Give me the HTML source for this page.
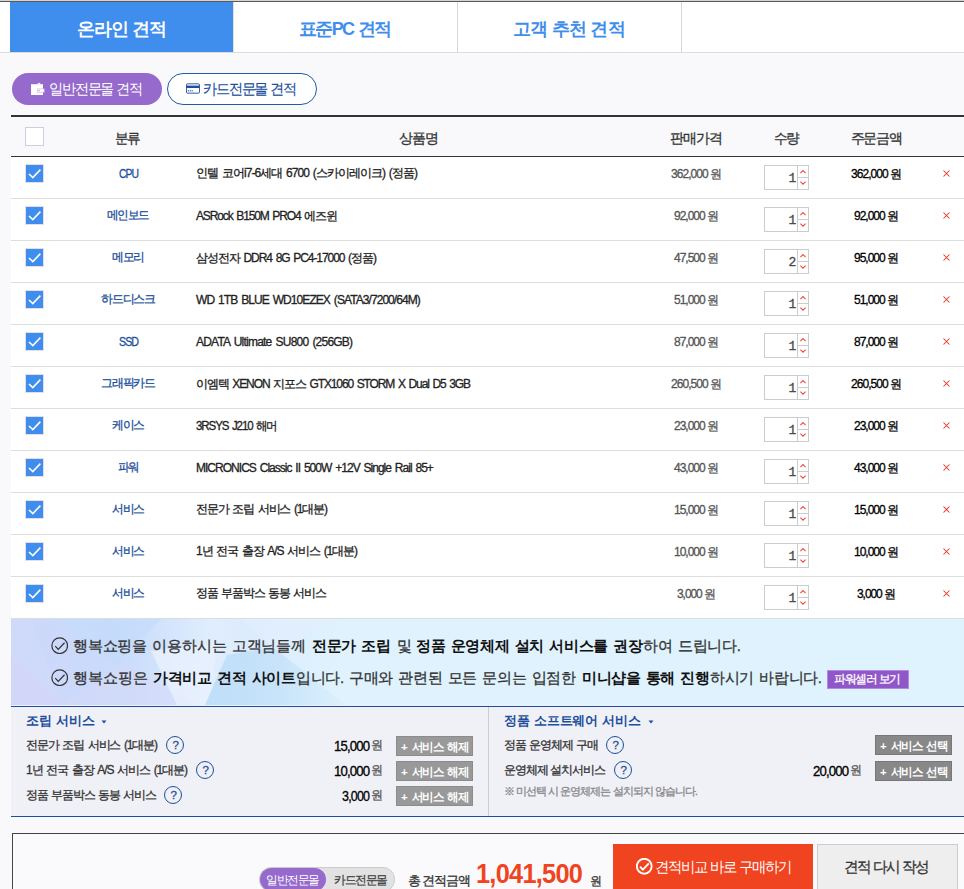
<!DOCTYPE html>
<html lang="ko"><head><meta charset="utf-8"><title>온라인 견적</title>
<style>
html,body{margin:0;padding:0}
body{width:964px;height:889px;overflow:hidden;position:relative;background:#f9f9fc;font-family:"Liberation Sans",sans-serif;}
.abs{position:absolute;display:block}
.t{position:absolute;white-space:nowrap;line-height:20px;height:20px;transform-origin:0 50%}
.b{font-weight:bold}
.t{-webkit-text-stroke:0.3px}
.b,.ns{-webkit-text-stroke:0}
</style></head><body>
<div class="abs" style="left:0;top:0;width:964px;height:52px;background:#fff"></div>
<div class="abs" style="left:0;top:0;width:964px;height:1px;background:#d4d4d4"></div>
<div class="abs" style="left:0;top:1px;width:964px;height:1px;background:#5a5a5a"></div>
<div class="abs" style="left:0;top:52px;width:964px;height:1px;background:#dcdcdc"></div>
<div class="abs" style="left:10px;top:2px;width:223px;height:50px;background:#3f8ded"></div>
<div class="abs" style="left:233px;top:2px;width:1px;height:50px;background:#e4e0dc"></div>
<div class="abs" style="left:457px;top:2px;width:1px;height:50px;background:#d8d8d8"></div>
<div class="abs" style="left:681px;top:2px;width:1px;height:50px;background:#d8d8d8"></div>
<div class="abs" style="left:12px;top:73px;width:150px;height:32px;border-radius:16px;background:#9669cc"></div>
<svg class="abs" style="left:30px;top:82px" width="15" height="14" viewBox="0 0 15 14"><path d="M1 2.2 H13 V13 H1 Z" fill="#fff"/><path d="M6.4 2.3 L9.4 0.8 L11 2.3 Z" fill="#fff"/><rect x="7.3" y="6.9" width="6.9" height="3.3" fill="#fff" stroke="#c8aeea" stroke-width="0.6"/><circle cx="9" cy="8.55" r="0.7" fill="#a98be0"/></svg>
<div class="abs" style="left:167px;top:73px;width:148px;height:30px;border-radius:16px;background:#fff;border:1px solid #1f5ba8"></div>
<svg class="abs" style="left:185.5px;top:83px" width="14" height="11" viewBox="0 0 15 11"><rect x="0.5" y="0.5" width="14" height="10" rx="1.2" fill="#fff" stroke="#1d4f9c" stroke-width="1"/><rect x="0.5" y="2.4" width="14" height="2.6" fill="#1d4f9c"/><rect x="2" y="7.4" width="1.2" height="1.2" fill="#1d4f9c"/><rect x="4" y="7.4" width="1.2" height="1.2" fill="#1d4f9c"/><rect x="6" y="7.4" width="1.2" height="1.2" fill="#1d4f9c"/></svg>
<div class="abs" style="left:11px;top:115px;width:953px;height:2px;background:#333"></div>
<div class="abs" style="left:11px;top:156px;width:953px;height:1px;background:#333"></div>
<div class="abs" style="left:11px;top:157px;width:953px;height:462px;background:#fff"></div>
<div class="abs" style="left:25px;top:127px;width:17px;height:17px;background:#fff;border:1px solid #cfcde0"></div>
<div class="abs" style="left:11px;top:198px;width:953px;height:1px;background:#ddd"></div>
<div class="abs" style="left:25px;top:164px;width:17px;height:17px;background:#3f8ded;border:1px solid #e6dcec"></div>
<svg class="abs" style="left:25px;top:164px" width="19" height="19" viewBox="0 0 19 19"><path d="M4 10 L7.8 13.6 L15.4 5.6" fill="none" stroke="#fff" stroke-width="1.6"/></svg>
<div class="abs" style="left:764px;top:165px;width:43px;height:23px;background:#fff;border:1px solid #ccc"></div>
<div class="abs" style="left:797px;top:166px;width:1px;height:23px;background:#ccc"></div>
<div class="abs" style="left:798px;top:177px;width:10px;height:1px;background:#ccc"></div>
<svg class="abs" style="left:798px;top:166px" width="10" height="23" viewBox="0 0 10 23"><path d="M2.4 7.2 L5 4.6 L7.6 7.2" fill="none" stroke="#f4463c" stroke-width="1.05"/><path d="M2.4 15.6 L5 18.2 L7.6 15.6" fill="none" stroke="#f4463c" stroke-width="1.05"/></svg>
<svg class="abs" style="left:942px;top:169px" width="9" height="9" viewBox="0 0 9 9"><path d="M1.5 1.5 L7.5 7.5 M7.5 1.5 L1.5 7.5" fill="none" stroke="#f03424" stroke-width="1.05"/></svg>
<div class="abs" style="left:11px;top:240px;width:953px;height:1px;background:#ddd"></div>
<div class="abs" style="left:25px;top:206px;width:17px;height:17px;background:#3f8ded;border:1px solid #e6dcec"></div>
<svg class="abs" style="left:25px;top:206px" width="19" height="19" viewBox="0 0 19 19"><path d="M4 10 L7.8 13.6 L15.4 5.6" fill="none" stroke="#fff" stroke-width="1.6"/></svg>
<div class="abs" style="left:764px;top:207px;width:43px;height:23px;background:#fff;border:1px solid #ccc"></div>
<div class="abs" style="left:797px;top:208px;width:1px;height:23px;background:#ccc"></div>
<div class="abs" style="left:798px;top:219px;width:10px;height:1px;background:#ccc"></div>
<svg class="abs" style="left:798px;top:208px" width="10" height="23" viewBox="0 0 10 23"><path d="M2.4 7.2 L5 4.6 L7.6 7.2" fill="none" stroke="#f4463c" stroke-width="1.05"/><path d="M2.4 15.6 L5 18.2 L7.6 15.6" fill="none" stroke="#f4463c" stroke-width="1.05"/></svg>
<svg class="abs" style="left:942px;top:211px" width="9" height="9" viewBox="0 0 9 9"><path d="M1.5 1.5 L7.5 7.5 M7.5 1.5 L1.5 7.5" fill="none" stroke="#f03424" stroke-width="1.05"/></svg>
<div class="abs" style="left:11px;top:282px;width:953px;height:1px;background:#ddd"></div>
<div class="abs" style="left:25px;top:248px;width:17px;height:17px;background:#3f8ded;border:1px solid #e6dcec"></div>
<svg class="abs" style="left:25px;top:248px" width="19" height="19" viewBox="0 0 19 19"><path d="M4 10 L7.8 13.6 L15.4 5.6" fill="none" stroke="#fff" stroke-width="1.6"/></svg>
<div class="abs" style="left:764px;top:249px;width:43px;height:23px;background:#fff;border:1px solid #ccc"></div>
<div class="abs" style="left:797px;top:250px;width:1px;height:23px;background:#ccc"></div>
<div class="abs" style="left:798px;top:261px;width:10px;height:1px;background:#ccc"></div>
<svg class="abs" style="left:798px;top:250px" width="10" height="23" viewBox="0 0 10 23"><path d="M2.4 7.2 L5 4.6 L7.6 7.2" fill="none" stroke="#f4463c" stroke-width="1.05"/><path d="M2.4 15.6 L5 18.2 L7.6 15.6" fill="none" stroke="#f4463c" stroke-width="1.05"/></svg>
<svg class="abs" style="left:942px;top:253px" width="9" height="9" viewBox="0 0 9 9"><path d="M1.5 1.5 L7.5 7.5 M7.5 1.5 L1.5 7.5" fill="none" stroke="#f03424" stroke-width="1.05"/></svg>
<div class="abs" style="left:11px;top:324px;width:953px;height:1px;background:#ddd"></div>
<div class="abs" style="left:25px;top:290px;width:17px;height:17px;background:#3f8ded;border:1px solid #e6dcec"></div>
<svg class="abs" style="left:25px;top:290px" width="19" height="19" viewBox="0 0 19 19"><path d="M4 10 L7.8 13.6 L15.4 5.6" fill="none" stroke="#fff" stroke-width="1.6"/></svg>
<div class="abs" style="left:764px;top:291px;width:43px;height:23px;background:#fff;border:1px solid #ccc"></div>
<div class="abs" style="left:797px;top:292px;width:1px;height:23px;background:#ccc"></div>
<div class="abs" style="left:798px;top:303px;width:10px;height:1px;background:#ccc"></div>
<svg class="abs" style="left:798px;top:292px" width="10" height="23" viewBox="0 0 10 23"><path d="M2.4 7.2 L5 4.6 L7.6 7.2" fill="none" stroke="#f4463c" stroke-width="1.05"/><path d="M2.4 15.6 L5 18.2 L7.6 15.6" fill="none" stroke="#f4463c" stroke-width="1.05"/></svg>
<svg class="abs" style="left:942px;top:295px" width="9" height="9" viewBox="0 0 9 9"><path d="M1.5 1.5 L7.5 7.5 M7.5 1.5 L1.5 7.5" fill="none" stroke="#f03424" stroke-width="1.05"/></svg>
<div class="abs" style="left:11px;top:366px;width:953px;height:1px;background:#ddd"></div>
<div class="abs" style="left:25px;top:332px;width:17px;height:17px;background:#3f8ded;border:1px solid #e6dcec"></div>
<svg class="abs" style="left:25px;top:332px" width="19" height="19" viewBox="0 0 19 19"><path d="M4 10 L7.8 13.6 L15.4 5.6" fill="none" stroke="#fff" stroke-width="1.6"/></svg>
<div class="abs" style="left:764px;top:333px;width:43px;height:23px;background:#fff;border:1px solid #ccc"></div>
<div class="abs" style="left:797px;top:334px;width:1px;height:23px;background:#ccc"></div>
<div class="abs" style="left:798px;top:345px;width:10px;height:1px;background:#ccc"></div>
<svg class="abs" style="left:798px;top:334px" width="10" height="23" viewBox="0 0 10 23"><path d="M2.4 7.2 L5 4.6 L7.6 7.2" fill="none" stroke="#f4463c" stroke-width="1.05"/><path d="M2.4 15.6 L5 18.2 L7.6 15.6" fill="none" stroke="#f4463c" stroke-width="1.05"/></svg>
<svg class="abs" style="left:942px;top:337px" width="9" height="9" viewBox="0 0 9 9"><path d="M1.5 1.5 L7.5 7.5 M7.5 1.5 L1.5 7.5" fill="none" stroke="#f03424" stroke-width="1.05"/></svg>
<div class="abs" style="left:11px;top:408px;width:953px;height:1px;background:#ddd"></div>
<div class="abs" style="left:25px;top:374px;width:17px;height:17px;background:#3f8ded;border:1px solid #e6dcec"></div>
<svg class="abs" style="left:25px;top:374px" width="19" height="19" viewBox="0 0 19 19"><path d="M4 10 L7.8 13.6 L15.4 5.6" fill="none" stroke="#fff" stroke-width="1.6"/></svg>
<div class="abs" style="left:764px;top:375px;width:43px;height:23px;background:#fff;border:1px solid #ccc"></div>
<div class="abs" style="left:797px;top:376px;width:1px;height:23px;background:#ccc"></div>
<div class="abs" style="left:798px;top:387px;width:10px;height:1px;background:#ccc"></div>
<svg class="abs" style="left:798px;top:376px" width="10" height="23" viewBox="0 0 10 23"><path d="M2.4 7.2 L5 4.6 L7.6 7.2" fill="none" stroke="#f4463c" stroke-width="1.05"/><path d="M2.4 15.6 L5 18.2 L7.6 15.6" fill="none" stroke="#f4463c" stroke-width="1.05"/></svg>
<svg class="abs" style="left:942px;top:379px" width="9" height="9" viewBox="0 0 9 9"><path d="M1.5 1.5 L7.5 7.5 M7.5 1.5 L1.5 7.5" fill="none" stroke="#f03424" stroke-width="1.05"/></svg>
<div class="abs" style="left:11px;top:450px;width:953px;height:1px;background:#ddd"></div>
<div class="abs" style="left:25px;top:416px;width:17px;height:17px;background:#3f8ded;border:1px solid #e6dcec"></div>
<svg class="abs" style="left:25px;top:416px" width="19" height="19" viewBox="0 0 19 19"><path d="M4 10 L7.8 13.6 L15.4 5.6" fill="none" stroke="#fff" stroke-width="1.6"/></svg>
<div class="abs" style="left:764px;top:417px;width:43px;height:23px;background:#fff;border:1px solid #ccc"></div>
<div class="abs" style="left:797px;top:418px;width:1px;height:23px;background:#ccc"></div>
<div class="abs" style="left:798px;top:429px;width:10px;height:1px;background:#ccc"></div>
<svg class="abs" style="left:798px;top:418px" width="10" height="23" viewBox="0 0 10 23"><path d="M2.4 7.2 L5 4.6 L7.6 7.2" fill="none" stroke="#f4463c" stroke-width="1.05"/><path d="M2.4 15.6 L5 18.2 L7.6 15.6" fill="none" stroke="#f4463c" stroke-width="1.05"/></svg>
<svg class="abs" style="left:942px;top:421px" width="9" height="9" viewBox="0 0 9 9"><path d="M1.5 1.5 L7.5 7.5 M7.5 1.5 L1.5 7.5" fill="none" stroke="#f03424" stroke-width="1.05"/></svg>
<div class="abs" style="left:11px;top:492px;width:953px;height:1px;background:#ddd"></div>
<div class="abs" style="left:25px;top:458px;width:17px;height:17px;background:#3f8ded;border:1px solid #e6dcec"></div>
<svg class="abs" style="left:25px;top:458px" width="19" height="19" viewBox="0 0 19 19"><path d="M4 10 L7.8 13.6 L15.4 5.6" fill="none" stroke="#fff" stroke-width="1.6"/></svg>
<div class="abs" style="left:764px;top:459px;width:43px;height:23px;background:#fff;border:1px solid #ccc"></div>
<div class="abs" style="left:797px;top:460px;width:1px;height:23px;background:#ccc"></div>
<div class="abs" style="left:798px;top:471px;width:10px;height:1px;background:#ccc"></div>
<svg class="abs" style="left:798px;top:460px" width="10" height="23" viewBox="0 0 10 23"><path d="M2.4 7.2 L5 4.6 L7.6 7.2" fill="none" stroke="#f4463c" stroke-width="1.05"/><path d="M2.4 15.6 L5 18.2 L7.6 15.6" fill="none" stroke="#f4463c" stroke-width="1.05"/></svg>
<svg class="abs" style="left:942px;top:463px" width="9" height="9" viewBox="0 0 9 9"><path d="M1.5 1.5 L7.5 7.5 M7.5 1.5 L1.5 7.5" fill="none" stroke="#f03424" stroke-width="1.05"/></svg>
<div class="abs" style="left:11px;top:534px;width:953px;height:1px;background:#ddd"></div>
<div class="abs" style="left:25px;top:500px;width:17px;height:17px;background:#3f8ded;border:1px solid #e6dcec"></div>
<svg class="abs" style="left:25px;top:500px" width="19" height="19" viewBox="0 0 19 19"><path d="M4 10 L7.8 13.6 L15.4 5.6" fill="none" stroke="#fff" stroke-width="1.6"/></svg>
<div class="abs" style="left:764px;top:501px;width:43px;height:23px;background:#fff;border:1px solid #ccc"></div>
<div class="abs" style="left:797px;top:502px;width:1px;height:23px;background:#ccc"></div>
<div class="abs" style="left:798px;top:513px;width:10px;height:1px;background:#ccc"></div>
<svg class="abs" style="left:798px;top:502px" width="10" height="23" viewBox="0 0 10 23"><path d="M2.4 7.2 L5 4.6 L7.6 7.2" fill="none" stroke="#f4463c" stroke-width="1.05"/><path d="M2.4 15.6 L5 18.2 L7.6 15.6" fill="none" stroke="#f4463c" stroke-width="1.05"/></svg>
<svg class="abs" style="left:942px;top:505px" width="9" height="9" viewBox="0 0 9 9"><path d="M1.5 1.5 L7.5 7.5 M7.5 1.5 L1.5 7.5" fill="none" stroke="#f03424" stroke-width="1.05"/></svg>
<div class="abs" style="left:11px;top:576px;width:953px;height:1px;background:#ddd"></div>
<div class="abs" style="left:25px;top:542px;width:17px;height:17px;background:#3f8ded;border:1px solid #e6dcec"></div>
<svg class="abs" style="left:25px;top:542px" width="19" height="19" viewBox="0 0 19 19"><path d="M4 10 L7.8 13.6 L15.4 5.6" fill="none" stroke="#fff" stroke-width="1.6"/></svg>
<div class="abs" style="left:764px;top:543px;width:43px;height:23px;background:#fff;border:1px solid #ccc"></div>
<div class="abs" style="left:797px;top:544px;width:1px;height:23px;background:#ccc"></div>
<div class="abs" style="left:798px;top:555px;width:10px;height:1px;background:#ccc"></div>
<svg class="abs" style="left:798px;top:544px" width="10" height="23" viewBox="0 0 10 23"><path d="M2.4 7.2 L5 4.6 L7.6 7.2" fill="none" stroke="#f4463c" stroke-width="1.05"/><path d="M2.4 15.6 L5 18.2 L7.6 15.6" fill="none" stroke="#f4463c" stroke-width="1.05"/></svg>
<svg class="abs" style="left:942px;top:547px" width="9" height="9" viewBox="0 0 9 9"><path d="M1.5 1.5 L7.5 7.5 M7.5 1.5 L1.5 7.5" fill="none" stroke="#f03424" stroke-width="1.05"/></svg>
<div class="abs" style="left:11px;top:618px;width:953px;height:1px;background:#ddd"></div>
<div class="abs" style="left:25px;top:584px;width:17px;height:17px;background:#3f8ded;border:1px solid #e6dcec"></div>
<svg class="abs" style="left:25px;top:584px" width="19" height="19" viewBox="0 0 19 19"><path d="M4 10 L7.8 13.6 L15.4 5.6" fill="none" stroke="#fff" stroke-width="1.6"/></svg>
<div class="abs" style="left:764px;top:585px;width:43px;height:23px;background:#fff;border:1px solid #ccc"></div>
<div class="abs" style="left:797px;top:586px;width:1px;height:23px;background:#ccc"></div>
<div class="abs" style="left:798px;top:597px;width:10px;height:1px;background:#ccc"></div>
<svg class="abs" style="left:798px;top:586px" width="10" height="23" viewBox="0 0 10 23"><path d="M2.4 7.2 L5 4.6 L7.6 7.2" fill="none" stroke="#f4463c" stroke-width="1.05"/><path d="M2.4 15.6 L5 18.2 L7.6 15.6" fill="none" stroke="#f4463c" stroke-width="1.05"/></svg>
<svg class="abs" style="left:942px;top:589px" width="9" height="9" viewBox="0 0 9 9"><path d="M1.5 1.5 L7.5 7.5 M7.5 1.5 L1.5 7.5" fill="none" stroke="#f03424" stroke-width="1.05"/></svg>
<svg class="abs" style="left:11px;top:619px" width="953" height="86" viewBox="0 0 953 86" preserveAspectRatio="none">
<defs><linearGradient id="bg" x1="0" y1="0" x2="1" y2="0">
<stop offset="0" stop-color="#cdd8fa"/><stop offset="0.06" stop-color="#ccd9fa"/><stop offset="0.12" stop-color="#c9dcfb"/><stop offset="0.17" stop-color="#d5e5fc"/><stop offset="0.21" stop-color="#e0edfd"/><stop offset="0.25" stop-color="#dcebfd"/><stop offset="0.34" stop-color="#dff2fd"/><stop offset="1" stop-color="#dff3fe"/></linearGradient>
<linearGradient id="sk" x1="0" y1="0" x2="1" y2="0"><stop offset="0" stop-color="#b4d9f7"/><stop offset="0.55" stop-color="#c2e1f9"/><stop offset="1" stop-color="#dcf0fd"/></linearGradient></defs>
<rect width="953" height="86" fill="url(#bg)"/>
<polygon points="0,38 52,86 0,86" fill="#d6d6f9" opacity="0.6"/>
<polygon points="52,86 185,86 112,44" fill="#d6d8f9" opacity="0.6"/>
<polygon points="20,0 52,86 0,38 0,0" fill="#d2dafa" opacity="0.5"/>
<polygon points="45,0 150,0 104,46" fill="#c5dbfb" opacity="0.7"/>
<polygon points="140,32 206,24 198,86 166,86" fill="#e9f2fe" opacity="0.75"/>
<polygon points="194,86 216,36 262,28 335,86" fill="url(#sk)" opacity="0.75"/>
<polygon points="230,0 330,0 262,28" fill="#e2effd" opacity="0.6"/>
</svg>
<div class="abs" style="left:11px;top:705px;width:953px;height:1px;background:#eef1fb"></div>
<div class="abs" style="left:11px;top:706px;width:953px;height:1px;background:#1c4f9e"></div>
<svg class="abs" style="left:50.8px;top:636.8px" width="17.4" height="17.4" viewBox="0 0 20 20"><circle cx="10" cy="10" r="9" fill="none" stroke="#333" stroke-width="1.37931"/><path d="M4.9 10.4 L8.3 14.2 L15.6 6.6" fill="none" stroke="#333" stroke-width="1.37931"/></svg>
<svg class="abs" style="left:50.8px;top:668.8px" width="17.4" height="17.4" viewBox="0 0 20 20"><circle cx="10" cy="10" r="9" fill="none" stroke="#333" stroke-width="1.37931"/><path d="M4.9 10.4 L8.3 14.2 L15.6 6.6" fill="none" stroke="#333" stroke-width="1.37931"/></svg>
<div class="abs" style="left:827px;top:670px;width:80px;height:17px;background:#9057c8;border:1px solid #b48ae0"></div>
<div class="abs" style="left:11px;top:707px;width:953px;height:109px;background:#f0f0f7"></div>
<div class="abs" style="left:488px;top:707px;width:1px;height:109px;background:#ccc"></div>
<div class="abs" style="left:11px;top:816px;width:953px;height:1px;background:#1c4f9e"></div>
<svg class="abs" style="left:101px;top:720px" width="6" height="4" viewBox="0 0 6 4"><path d="M0.5 0.5 L5.5 0.5 L3 3.5 Z" fill="#1d4f9c"/></svg>
<svg class="abs" style="left:648px;top:720px" width="6" height="4" viewBox="0 0 6 4"><path d="M0.5 0.5 L5.5 0.5 L3 3.5 Z" fill="#1d4f9c"/></svg>
<div class="abs" style="left:166px;top:736px;width:16px;height:16px;border-radius:9px;border:1px solid #1d4f9c"></div>
<div class="abs" style="left:396px;top:736px;width:75px;height:18px;background:#999;border:1px solid #8c8c8c"></div>
<div class="abs" style="left:196px;top:761px;width:16px;height:16px;border-radius:9px;border:1px solid #1d4f9c"></div>
<div class="abs" style="left:396px;top:761px;width:75px;height:18px;background:#999;border:1px solid #8c8c8c"></div>
<div class="abs" style="left:164px;top:786px;width:16px;height:16px;border-radius:9px;border:1px solid #1d4f9c"></div>
<div class="abs" style="left:396px;top:786px;width:75px;height:18px;background:#999;border:1px solid #8c8c8c"></div>
<div class="abs" style="left:606px;top:736px;width:16px;height:16px;border-radius:9px;border:1px solid #1d4f9c"></div>
<div class="abs" style="left:614px;top:761px;width:16px;height:16px;border-radius:9px;border:1px solid #1d4f9c"></div>
<div class="abs" style="left:875px;top:735px;width:75px;height:18px;background:#888;border:1px solid #777"></div>
<div class="abs" style="left:875px;top:761px;width:75px;height:18px;background:#888;border:1px solid #777"></div>
<div class="abs" style="left:12px;top:833px;width:960px;height:70px;background:#fafafc;border:1px solid #444"></div>
<div class="abs" style="left:259px;top:867px;width:134px;height:23px;border-radius:12px;background:#e2e2e2;border:1px solid #ccc"></div>
<div class="abs" style="left:260px;top:868px;width:66px;height:23px;border-radius:12px;background:#9669cc"></div>
<div class="abs" style="left:613px;top:844px;width:200px;height:50px;background:#f04320"></div>
<svg class="abs" style="left:636px;top:858px" width="16.5" height="16.5" viewBox="0 0 20 20"><circle cx="10" cy="10" r="9" fill="none" stroke="#fff" stroke-width="2.30303"/><path d="M4.9 10.4 L8.3 14.2 L15.6 6.6" fill="none" stroke="#fff" stroke-width="2.30303"/></svg>
<div class="abs" style="left:817px;top:844px;width:139px;height:50px;background:#eee;border:1px solid #ccc"></div>
<span class="t b" style="left:76.5px;top:18.5px;font-size:18px;color:#fff;letter-spacing:-1px;">온라인 견적</span>
<span class="t b" style="left:299px;top:18.5px;font-size:18px;color:#3f8ded;letter-spacing:-1.67px;word-spacing:1px;">표준PC 견적</span>
<span class="t b" style="left:513.2px;top:18.5px;font-size:18px;color:#3f8ded;letter-spacing:-0.79px;">고객 추천 견적</span>
<span class="t" style="left:49px;top:78.5px;font-size:15px;color:#fff;letter-spacing:-1.43px;transform:scaleX(0.948);-webkit-text-stroke:0;">일반전문몰 견적</span>
<span class="t" style="left:203px;top:78.5px;font-size:15px;color:#1d4f9c;letter-spacing:-1.43px;transform:scaleX(0.948);-webkit-text-stroke:0.15px;">카드전문몰 견적</span>
<span class="t" style="left:115px;top:127.5px;font-size:14px;color:#333;letter-spacing:-1.33px;transform:scaleX(0.975);">분류</span>
<span class="t" style="left:399px;top:127.5px;font-size:14px;color:#333;letter-spacing:-1px;">상품명</span>
<span class="t" style="left:670px;top:127.5px;font-size:14px;color:#333;letter-spacing:-1px;">판매가격</span>
<span class="t" style="left:774px;top:127.5px;font-size:14px;color:#333;letter-spacing:-1.33px;transform:scaleX(0.975);">수량</span>
<span class="t" style="left:850.5px;top:127.5px;font-size:14px;color:#333;letter-spacing:-1.33px;">주문금액</span>
<span class="t" style="left:118.5px;top:164px;font-size:12px;color:#1d4f9c;letter-spacing:-1.14px;transform:scaleX(0.867);">CPU</span>
<span class="t" style="left:196px;top:163px;font-size:12px;color:#222;letter-spacing:-0.97px;word-spacing:1.5px;">인텔 코어i7-6세대 6700 (스카이레이크) (정품)</span>
<span class="t" style="left:671px;top:164px;font-size:12px;color:#555;letter-spacing:-0.96px;">362,000 원</span>
<span class="t" style="left:851px;top:164px;font-size:12px;color:#000;letter-spacing:-0.96px;">362,000 원</span>
<span class="t" style="left:788.5px;top:168.5px;font-size:13px;color:#4a4a4a;font-family:'Liberation Mono',monospace;">1</span>
<span class="t" style="left:107px;top:205px;font-size:12px;color:#1d4f9c;letter-spacing:-1.14px;transform:scaleX(0.965);">메인보드</span>
<span class="t" style="left:196px;top:206px;font-size:12px;color:#222;letter-spacing:-1.13px;word-spacing:1.5px;">ASRock B150M PRO4 에즈윈</span>
<span class="t" style="left:674px;top:206px;font-size:12px;color:#555;letter-spacing:-1.01px;">92,000 원</span>
<span class="t" style="left:854px;top:206px;font-size:12px;color:#000;letter-spacing:-1.01px;">92,000 원</span>
<span class="t" style="left:788.5px;top:210.5px;font-size:13px;color:#4a4a4a;font-family:'Liberation Mono',monospace;">1</span>
<span class="t" style="left:112px;top:247px;font-size:12px;color:#1d4f9c;letter-spacing:-1.14px;transform:scaleX(0.979);">메모리</span>
<span class="t" style="left:196px;top:248px;font-size:12px;color:#222;letter-spacing:-1.07px;word-spacing:1.5px;">삼성전자 DDR4 8G PC4-17000 (정품)</span>
<span class="t" style="left:674px;top:248px;font-size:12px;color:#555;letter-spacing:-1.01px;">47,500 원</span>
<span class="t" style="left:854px;top:248px;font-size:12px;color:#000;letter-spacing:-1.01px;">95,000 원</span>
<span class="t" style="left:788.5px;top:252.5px;font-size:13px;color:#4a4a4a;font-family:'Liberation Mono',monospace;">2</span>
<span class="t" style="left:101px;top:289px;font-size:12px;color:#1d4f9c;letter-spacing:-1.14px;transform:scaleX(0.992);">하드디스크</span>
<span class="t" style="left:196px;top:290px;font-size:12px;color:#222;letter-spacing:-0.93px;word-spacing:1.5px;">WD 1TB BLUE WD10EZEX (SATA3/7200/64M)</span>
<span class="t" style="left:674px;top:290px;font-size:12px;color:#555;letter-spacing:-1.01px;">51,000 원</span>
<span class="t" style="left:854px;top:290px;font-size:12px;color:#000;letter-spacing:-1.01px;">51,000 원</span>
<span class="t" style="left:788.5px;top:294.5px;font-size:13px;color:#4a4a4a;font-family:'Liberation Mono',monospace;">1</span>
<span class="t" style="left:118.5px;top:332px;font-size:12px;color:#1d4f9c;letter-spacing:-1.14px;transform:scaleX(0.893);">SSD</span>
<span class="t" style="left:196px;top:332px;font-size:12px;color:#222;letter-spacing:-0.78px;word-spacing:1.5px;">ADATA Ultimate SU800 (256GB)</span>
<span class="t" style="left:674px;top:332px;font-size:12px;color:#555;letter-spacing:-1.01px;">87,000 원</span>
<span class="t" style="left:854px;top:332px;font-size:12px;color:#000;letter-spacing:-1.01px;">87,000 원</span>
<span class="t" style="left:788.5px;top:336.5px;font-size:13px;color:#4a4a4a;font-family:'Liberation Mono',monospace;">1</span>
<span class="t" style="left:101px;top:373px;font-size:12px;color:#1d4f9c;letter-spacing:-1.14px;transform:scaleX(0.992);">그래픽카드</span>
<span class="t" style="left:196px;top:374px;font-size:12px;color:#222;letter-spacing:-1.12px;word-spacing:1.5px;">이엠텍 XENON 지포스 GTX1060 STORM X Dual D5 3GB</span>
<span class="t" style="left:671px;top:374px;font-size:12px;color:#555;letter-spacing:-0.96px;">260,500 원</span>
<span class="t" style="left:851px;top:374px;font-size:12px;color:#000;letter-spacing:-0.96px;">260,500 원</span>
<span class="t" style="left:788.5px;top:378.5px;font-size:13px;color:#4a4a4a;font-family:'Liberation Mono',monospace;">1</span>
<span class="t" style="left:112px;top:415px;font-size:12px;color:#1d4f9c;letter-spacing:-1.14px;transform:scaleX(0.979);">케이스</span>
<span class="t" style="left:196px;top:416px;font-size:12px;color:#222;letter-spacing:-1.14px;transform:scaleX(0.961);word-spacing:1.5px;">3RSYS J210 해머</span>
<span class="t" style="left:674px;top:416px;font-size:12px;color:#555;letter-spacing:-1.01px;">23,000 원</span>
<span class="t" style="left:854px;top:416px;font-size:12px;color:#000;letter-spacing:-1.01px;">23,000 원</span>
<span class="t" style="left:788.5px;top:420.5px;font-size:13px;color:#4a4a4a;font-family:'Liberation Mono',monospace;">1</span>
<span class="t" style="left:117.5px;top:457px;font-size:12px;color:#1d4f9c;letter-spacing:-1.14px;transform:scaleX(0.962);">파워</span>
<span class="t" style="left:196px;top:458px;font-size:12px;color:#222;letter-spacing:-0.98px;word-spacing:1.5px;">MICRONICS Classic II 500W +12V Single Rail 85+</span>
<span class="t" style="left:674px;top:458px;font-size:12px;color:#555;letter-spacing:-1.01px;">43,000 원</span>
<span class="t" style="left:854px;top:458px;font-size:12px;color:#000;letter-spacing:-1.01px;">43,000 원</span>
<span class="t" style="left:788.5px;top:462.5px;font-size:13px;color:#4a4a4a;font-family:'Liberation Mono',monospace;">1</span>
<span class="t" style="left:112px;top:499px;font-size:12px;color:#1d4f9c;letter-spacing:-1.14px;transform:scaleX(0.979);">서비스</span>
<span class="t" style="left:196px;top:499px;font-size:12px;color:#222;letter-spacing:-1.14px;word-spacing:1.5px;">전문가 조립 서비스 (1대분)</span>
<span class="t" style="left:674px;top:500px;font-size:12px;color:#555;letter-spacing:-1.01px;">15,000 원</span>
<span class="t" style="left:854px;top:500px;font-size:12px;color:#000;letter-spacing:-1.01px;">15,000 원</span>
<span class="t" style="left:788.5px;top:504.5px;font-size:13px;color:#4a4a4a;font-family:'Liberation Mono',monospace;">1</span>
<span class="t" style="left:112px;top:541px;font-size:12px;color:#1d4f9c;letter-spacing:-1.14px;transform:scaleX(0.979);">서비스</span>
<span class="t" style="left:196px;top:541px;font-size:12px;color:#222;letter-spacing:-1.09px;word-spacing:1.5px;">1년 전국 출장 A/S 서비스 (1대분)</span>
<span class="t" style="left:674px;top:542px;font-size:12px;color:#555;letter-spacing:-1.01px;">10,000 원</span>
<span class="t" style="left:854px;top:542px;font-size:12px;color:#000;letter-spacing:-1.01px;">10,000 원</span>
<span class="t" style="left:788.5px;top:546.5px;font-size:13px;color:#4a4a4a;font-family:'Liberation Mono',monospace;">1</span>
<span class="t" style="left:112px;top:583px;font-size:12px;color:#1d4f9c;letter-spacing:-1.14px;transform:scaleX(0.979);">서비스</span>
<span class="t" style="left:196px;top:583px;font-size:12px;color:#222;letter-spacing:-1.14px;transform:scaleX(0.995);word-spacing:1.5px;">정품 부품박스 동봉 서비스</span>
<span class="t" style="left:677px;top:584px;font-size:12px;color:#555;letter-spacing:-1.06px;">3,000 원</span>
<span class="t" style="left:857px;top:584px;font-size:12px;color:#000;letter-spacing:-1.06px;">3,000 원</span>
<span class="t" style="left:788.5px;top:588.5px;font-size:13px;color:#4a4a4a;font-family:'Liberation Mono',monospace;">1</span>
<span class="t" style="left:73px;top:636px;font-size:15px;color:#333;letter-spacing:-0.21px;word-spacing:1.5px;">행복쇼핑을 이용하시는 고객님들께</span>
<span class="t b" style="left:312px;top:636px;font-size:15px;color:#111;letter-spacing:-0.33px;word-spacing:1.5px;">전문가 조립</span>
<span class="t" style="left:397px;top:636px;font-size:15px;color:#333;">및</span>
<span class="t b" style="left:416px;top:636px;font-size:15px;color:#111;letter-spacing:-0.33px;word-spacing:1.5px;">정품 운영체제 설치 서비스를 권장</span>
<span class="t" style="left:643px;top:636px;font-size:15px;color:#333;letter-spacing:-0.26px;word-spacing:1.5px;">하여 드립니다.</span>
<span class="t" style="left:73px;top:668px;font-size:15px;color:#333;word-spacing:1.5px;">행복쇼핑은</span>
<span class="t b" style="left:153px;top:668px;font-size:15px;color:#111;letter-spacing:-0.33px;word-spacing:1.5px;">가격비교 견적 사이트</span>
<span class="t" style="left:296px;top:668px;font-size:15px;color:#333;letter-spacing:-0.34px;word-spacing:1.5px;">입니다. 구매와 관련된 모든 문의는 입점한</span>
<span class="t b" style="left:582px;top:668px;font-size:15px;color:#111;letter-spacing:-0.37px;word-spacing:1.5px;">미니샵을 통해 진행</span>
<span class="t" style="left:710px;top:668px;font-size:15px;color:#333;letter-spacing:-0.36px;word-spacing:1.5px;">하시기 바랍니다.</span>
<span class="t" style="left:834px;top:668.5px;font-size:11.5px;color:#fff;letter-spacing:-1.09px;transform:scaleX(0.976);">파워셀러 보기</span>
<span class="t b" style="left:26px;top:711px;font-size:13px;color:#1d4f9c;letter-spacing:0.07px;">조립 서비스</span>
<span class="t b" style="left:504px;top:711px;font-size:13px;color:#1d4f9c;letter-spacing:-0.02px;">정품 소프트웨어 서비스</span>
<span class="t" style="left:26px;top:735px;font-size:12px;color:#333;letter-spacing:-1.14px;word-spacing:1.5px;">전문가 조립 서비스 (1대분)</span>
<span class="t" style="left:172.5px;top:735.3px;font-size:11.5px;color:#1d4f9c;">?</span>
<span class="t" style="left:371px;top:735px;font-size:12px;color:#555;">원</span>
<span class="t" style="left:333.5px;top:736px;font-size:14px;color:#000;letter-spacing:-0.9px;transform:scaleX(0.939);">15,000</span>
<span class="t b" style="left:401px;top:736.5px;font-size:11.5px;color:#fff;">+</span>
<span class="t b" style="left:412px;top:736.5px;font-size:11.5px;color:#fff;letter-spacing:-1.09px;transform:scaleX(0.962);word-spacing:2px;">서비스 해제</span>
<span class="t" style="left:26px;top:760px;font-size:12px;color:#333;letter-spacing:-1.09px;word-spacing:1.5px;">1년 전국 출장 A/S 서비스 (1대분)</span>
<span class="t" style="left:202.5px;top:760.3px;font-size:11.5px;color:#1d4f9c;">?</span>
<span class="t" style="left:371px;top:760px;font-size:12px;color:#555;">원</span>
<span class="t" style="left:333.5px;top:761px;font-size:14px;color:#000;letter-spacing:-0.9px;transform:scaleX(0.939);">10,000</span>
<span class="t b" style="left:401px;top:761.5px;font-size:11.5px;color:#fff;">+</span>
<span class="t b" style="left:412px;top:761.5px;font-size:11.5px;color:#fff;letter-spacing:-1.09px;transform:scaleX(0.962);word-spacing:2px;">서비스 해제</span>
<span class="t" style="left:26px;top:785px;font-size:12px;color:#333;letter-spacing:-1.14px;transform:scaleX(0.995);word-spacing:1.5px;">정품 부품박스 동봉 서비스</span>
<span class="t" style="left:170.5px;top:785.3px;font-size:11.5px;color:#1d4f9c;">?</span>
<span class="t" style="left:371px;top:785px;font-size:12px;color:#555;">원</span>
<span class="t" style="left:341.5px;top:786px;font-size:14px;color:#000;letter-spacing:-0.9px;transform:scaleX(0.89);">3,000</span>
<span class="t b" style="left:401px;top:786.5px;font-size:11.5px;color:#fff;">+</span>
<span class="t b" style="left:412px;top:786.5px;font-size:11.5px;color:#fff;letter-spacing:-1.09px;transform:scaleX(0.962);word-spacing:2px;">서비스 해제</span>
<span class="t" style="left:504px;top:735px;font-size:12px;color:#333;letter-spacing:-0.85px;">정품 운영체제 구매</span>
<span class="t" style="left:612.5px;top:735.3px;font-size:11.5px;color:#1d4f9c;">?</span>
<span class="t" style="left:504px;top:760px;font-size:12px;color:#333;letter-spacing:-1.04px;">운영체제 설치서비스</span>
<span class="t" style="left:620.5px;top:760.3px;font-size:11.5px;color:#1d4f9c;">?</span>
<span class="t" style="left:504px;top:781px;font-size:10.5px;color:#888;letter-spacing:-0.94px;">※ 미선택 시 운영체제는 설치되지 않습니다.</span>
<span class="t b" style="left:880px;top:735.5px;font-size:11.5px;color:#fff;">+</span>
<span class="t b" style="left:890.5px;top:735.5px;font-size:11.5px;color:#fff;letter-spacing:-1.09px;transform:scaleX(0.962);word-spacing:2px;">서비스 선택</span>
<span class="t b" style="left:880px;top:761.5px;font-size:11.5px;color:#fff;">+</span>
<span class="t b" style="left:890.5px;top:761.5px;font-size:11.5px;color:#fff;letter-spacing:-1.09px;transform:scaleX(0.962);word-spacing:2px;">서비스 선택</span>
<span class="t" style="left:850px;top:760px;font-size:12px;color:#555;">원</span>
<span class="t" style="left:812.5px;top:761px;font-size:14px;color:#000;letter-spacing:-0.9px;transform:scaleX(0.939);">20,000</span>
<span class="t" style="left:266px;top:869.5px;font-size:12px;color:#fff;letter-spacing:-1.14px;transform:scaleX(0.974);-webkit-text-stroke:0;">일반전문몰</span>
<span class="t" style="left:334px;top:869.5px;font-size:12px;color:#444;letter-spacing:-1.14px;transform:scaleX(0.974);">카드전문몰</span>
<span class="t" style="left:408px;top:870.5px;font-size:13px;color:#333;letter-spacing:-1.12px;">총 견적금액</span>
<span class="t b" style="left:476px;top:864px;font-size:28px;color:#f04320;letter-spacing:-0.8px;transform:scaleX(0.905);">1,041,500</span>
<span class="t" style="left:590px;top:871px;font-size:12px;color:#333;">원</span>
<span class="t" style="left:654.5px;top:857px;font-size:15px;color:#fff;letter-spacing:-1.43px;transform:scaleX(0.961);-webkit-text-stroke:0;">견적비교 바로 구매하기</span>
<span class="t" style="left:844px;top:856.5px;font-size:15px;color:#333;letter-spacing:-1.43px;transform:scaleX(0.974);">견적 다시 작성</span>
</body></html>
